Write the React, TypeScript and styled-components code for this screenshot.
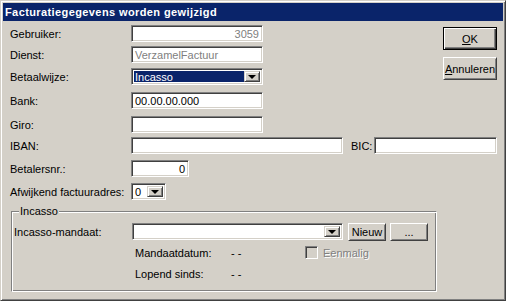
import { FC, ReactNode } from 'react';
import styled, { createGlobalStyle } from 'styled-components';

const GlobalStyle = createGlobalStyle`
  body {
    margin: 0;
    background: #d4d0c8;
    font-family: 'Liberation Sans', Arial, sans-serif;
    font-size: 11px;
    color: #000;
  }
`;

const Window = styled.div`
  box-sizing: border-box;
  width: 506px;
  height: 301px;
  background: #d4d0c8;
  border: 1px solid;
  border-color: #d4d0c8 #404040 #404040 #d4d0c8;
  box-shadow: inset 1px 1px 0 #fff, inset -1px -1px 0 #808080;
  padding: 2px;
  display: flex;
  flex-direction: column;
`;

const TitleBar = styled.div`
  height: 18px;
  background: #0a246a;
  color: #fff;
  font-weight: bold;
  font-size: 11px;
  display: flex;
  align-items: center;
  padding-left: 2px;
  letter-spacing: 0.4px;
`;

const Body = styled.div`
  padding: 4px 6px 0 7px;
  display: flex;
  flex-direction: column;
`;

const TopSection = styled.div`
  display: flex;
  justify-content: space-between;
`;

const Column = styled.div`
  display: flex;
  flex-direction: column;
`;

const ButtonColumn = styled.div`
  display: flex;
  flex-direction: column;
  gap: 7px;
  padding-top: 2px;
`;

const Row = styled.div<{ $top?: number }>`
  display: flex;
  align-items: center;
  height: 17px;
  margin-top: ${({ $top }) => $top ?? 0}px;
`;

const Label = styled.span<{ $w?: number; $gap?: number }>`
  width: ${({ $w }) => $w ?? 121}px;
  margin-left: ${({ $gap }) => $gap ?? 0}px;
  flex: none;
  white-space: nowrap;
`;

const Field = styled.div<{ $w: number; $right?: boolean; $grey?: boolean }>`
  box-sizing: border-box;
  width: ${({ $w }) => $w}px;
  height: 17px;
  background: #fff;
  border: 1px solid;
  border-color: #808080 #fff #fff #808080;
  box-shadow: inset 1px 1px 0 #404040, inset -1px -1px 0 #d4d0c8;
  padding: 0 3px;
  display: flex;
  align-items: center;
  justify-content: ${({ $right }) => ($right ? 'flex-end' : 'flex-start')};
  color: ${({ $grey }) => ($grey ? '#808080' : '#000')};
  white-space: nowrap;
  overflow: hidden;
`;

const ComboBox = styled(Field)`
  padding: 2px;
  justify-content: space-between;
`;

const ComboText = styled.div<{ $selected?: boolean }>`
  flex: 1;
  height: 100%;
  display: flex;
  align-items: center;
  padding-left: 1px;
  background: ${({ $selected }) => ($selected ? '#0a246a' : 'transparent')};
  color: ${({ $selected }) => ($selected ? '#fff' : '#000')};
`;

const DropButton = styled.div`
  box-sizing: border-box;
  width: 16px;
  height: 100%;
  flex: none;
  background: #d4d0c8;
  border: 1px solid;
  border-color: #d4d0c8 #404040 #404040 #d4d0c8;
  box-shadow: inset 1px 1px 0 #fff, inset -1px -1px 0 #808080;
  display: flex;
  align-items: center;
  justify-content: center;
`;

const Arrow = styled.div`
  width: 0;
  height: 0;
  border-left: 4px solid transparent;
  border-right: 4px solid transparent;
  border-top: 4px solid #000;
  margin-top: 1px;
`;

const Button = styled.div<{ $w: number; $h?: number; $gap?: number; $default?: boolean }>`
  box-sizing: border-box;
  width: ${({ $w }) => $w}px;
  height: ${({ $h }) => $h ?? 23}px;
  margin-left: ${({ $gap }) => $gap ?? 0}px;
  background: #d4d0c8;
  border: 1px solid;
  border-color: ${({ $default }) =>
    $default ? '#000' : '#fff #404040 #404040 #fff'};
  box-shadow: ${({ $default }) =>
    $default
      ? 'inset 1px 1px 0 #fff, inset -1px -1px 0 #404040, inset -2px -2px 0 #808080'
      : 'inset 1px 1px 0 #d4d0c8, inset -1px -1px 0 #808080'};
  display: flex;
  align-items: center;
  justify-content: center;
  cursor: default;
`;

const Access = styled.span`
  text-decoration: underline;
`;

const Group = styled.div`
  position: relative;
  box-sizing: border-box;
  width: 426px;
  height: 81px;
  margin: 11px 0 0 1px;
  border: 1px solid;
  border-color: #808080 #fff #fff #808080;
  box-shadow: inset 1px 1px 0 #fff, inset -1px -1px 0 #808080;
  padding: 11px 2px 0 2px;
  display: flex;
  flex-direction: column;
`;

const Legend = styled.span`
  position: absolute;
  top: -7px;
  left: 7px;
  background: #d4d0c8;
  padding: 0 1px;
`;

const SubRow = styled(Row)`
  padding-left: 121px;
`;

const Dashes = styled.span`
  width: 74px;
  flex: none;
`;

const CheckBox = styled.div`
  box-sizing: border-box;
  width: 13px;
  height: 13px;
  border: 1px solid;
  border-color: #808080 #fff #fff #808080;
  box-shadow: inset 1px 1px 0 #404040, inset -1px -1px 0 #d4d0c8;
  background: #d4d0c8;
  margin-right: 5px;
`;

const DisabledText = styled.span`
  color: #808080;
  text-shadow: 1px 1px 0 #fff;
`;

const Combo: FC<{ w: number; selected?: boolean; children?: ReactNode }> = ({
  w,
  selected,
  children,
}) => (
  <ComboBox $w={w}>
    <ComboText $selected={selected}>{children}</ComboText>
    <DropButton>
      <Arrow />
    </DropButton>
  </ComboBox>
);

const App: FC = () => {
  return (
    <>
      <GlobalStyle />
      <Window>
        <TitleBar>Facturatiegegevens worden gewijzigd</TitleBar>
        <Body>
          <TopSection>
            <Column>
              <Row $top={0}>
                <Label>Gebruiker:</Label>
                <Field $w={132} $right $grey>
                  3059
                </Field>
              </Row>
              <Row $top={4}>
                <Label>Dienst:</Label>
                <Field $w={132} $grey>
                  VerzamelFactuur
                </Field>
              </Row>
              <Row $top={5}>
                <Label>Betaalwijze:</Label>
                <Combo w={132} selected>
                  Incasso
                </Combo>
              </Row>
            </Column>
            <ButtonColumn>
              <Button $w={54} $default>
                <Access>O</Access>K
              </Button>
              <Button $w={54}>
                <Access>A</Access>nnuleren
              </Button>
            </ButtonColumn>
          </TopSection>
          <Row $top={7}>
            <Label>Bank:</Label>
            <Field $w={132}>00.00.00.000</Field>
          </Row>
          <Row $top={7}>
            <Label>Giro:</Label>
            <Field $w={132} />
          </Row>
          <Row $top={4}>
            <Label>IBAN:</Label>
            <Field $w={212} />
            <Label $w={23} $gap={8}>
              BIC:
            </Label>
            <Field $w={123} />
          </Row>
          <Row $top={6}>
            <Label>Betalersnr.:</Label>
            <Field $w={58} $right>
              0
            </Field>
          </Row>
          <Row $top={6}>
            <Label>Afwijkend factuuradres:</Label>
            <Combo w={35}>0</Combo>
          </Row>
          <Group>
            <Legend>Incasso</Legend>
            <Row>
              <Label $w={118}>Incasso-mandaat:</Label>
              <Combo w={211} />
              <Button $w={38} $h={18} $gap={5}>
                Nieuw
              </Button>
              <Button $w={38} $h={18} $gap={4}>
                ...
              </Button>
            </Row>
            <SubRow $top={4}>
              <Label $w={96}>Mandaatdatum:</Label>
              <Dashes>- -</Dashes>
              <CheckBox />
              <DisabledText>Eenmalig</DisabledText>
            </SubRow>
            <SubRow $top={4}>
              <Label $w={96}>Lopend sinds:</Label>
              <Dashes>- -</Dashes>
            </SubRow>
          </Group>
        </Body>
      </Window>
    </>
  );
};

export default App;
